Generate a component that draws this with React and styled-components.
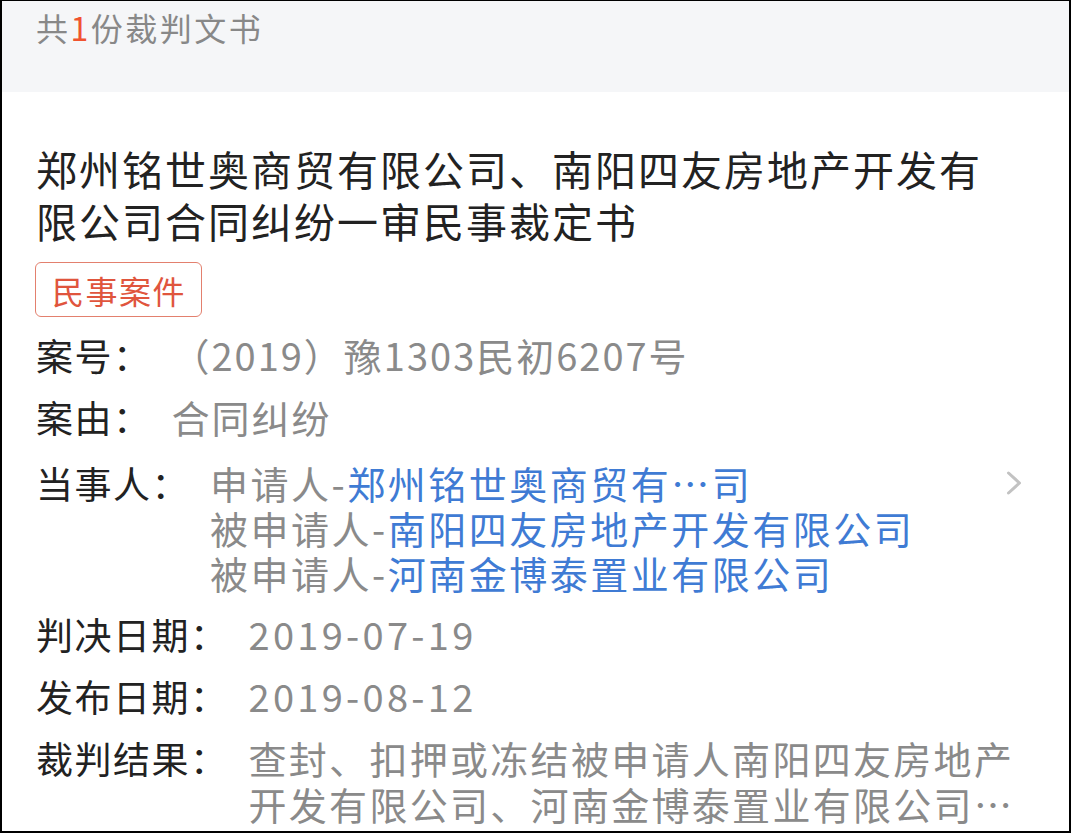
import React from "react";
import styled, { createGlobalStyle } from "styled-components";

const GlobalStyle = createGlobalStyle`
  body {
    margin: 0;
    font-family: "Noto Sans CJK SC", "Noto Sans", sans-serif;
    background: #fff;
  }
`;

const parties = [
  { role: "申请人", name: "郑州铭世奥商贸有…司" },
  { role: "被申请人", name: "南阳四友房地产开发有限公司" },
  { role: "被申请人", name: "河南金博泰置业有限公司" },
];

export default function App() {
  return (
    <Frame>
      <GlobalStyle />
      <TopBar>
        共<Count>1</Count>份裁判文书
      </TopBar>
      <Body>
        <Title>
          郑州铭世奥商贸有限公司、南阳四友房地产开发有限公司合同纠纷一审民事裁定书
        </Title>
        <Tag>民事案件</Tag>
        <Rows>
          <Row>
            <Label>案号：</Label>
            <Value>（2019）豫1303民初6207号</Value>
          </Row>
          <Row>
            <Label>案由：</Label>
            <Value>合同纠纷</Value>
          </Row>
          <Row $party>
            <Label>当事人：</Label>
            <Value $spacing={2.5}>
              {parties.map((p, i) => (
                <Line key={i} $tight>
                  {p.role}-<Link>{p.name}</Link>
                </Line>
              ))}
            </Value>
            <Chevron>
              <svg width="16" height="24" viewBox="0 0 16 24">
                <path
                  d="M2.5 2 L13.5 12 L2.5 22"
                  fill="none"
                  stroke="#c2c2c2"
                  strokeWidth="3"
                  strokeLinecap="round"
                  strokeLinejoin="round"
                />
              </svg>
            </Chevron>
          </Row>
          <Row>
            <Label>判决日期：</Label>
            <Value $spacing={3.3}>2019-07-19</Value>
          </Row>
          <Row>
            <Label>发布日期：</Label>
            <Value $spacing={3.3}>2019-08-12</Value>
          </Row>
          <Row>
            <Label>裁判结果：</Label>
            <Value $spacing={2.3}>
              <Line>查封、扣押或冻结被申请人南阳四友房地产</Line>
              <Line>开发有限公司、河南金博泰置业有限公司…</Line>
            </Value>
          </Row>
        </Rows>
      </Body>
    </Frame>
  );
}

const Frame = styled.div`
  width: 1071px;
  height: 833px;
  box-sizing: border-box;
  border: 2px solid #000;
  border-top-width: 1px;
  overflow: hidden;
  background: #fff;
`;

const TopBar = styled.div`
  height: 91px;
  box-sizing: border-box;
  padding: 5px 0 0 34px;
  background: #f5f6f8;
  font-size: 32px;
  line-height: 42px;
  letter-spacing: 2.5px;
  color: #888;
`;

const Count = styled.span`
  color: #f0532f;
`;

const Body = styled.div`
  padding: 50px 47px 0 34px;
`;

const Title = styled.h1`
  margin: 0;
  max-width: 960px;
  font-size: 41px;
  font-weight: 400;
  line-height: 52px;
  letter-spacing: 2px;
  color: #222;
`;

const Tag = styled.div`
  display: inline-flex;
  align-items: center;
  margin: 16px 0 0 -1px;
  height: 55px;
  box-sizing: border-box;
  padding: 0 15px 0 16px;
  border: 1px solid #e3806e;
  border-radius: 6px;
  font-size: 32px;
  letter-spacing: 1.5px;
  color: #e0553d;
`;

const Rows = styled.div`
  display: flex;
  flex-direction: column;
  gap: 16px;
  margin-top: 15px;
`;

const Row = styled.div`
  display: flex;
  align-items: flex-start;
  gap: 20px;
  line-height: 46px;
  padding-top: ${(p) => (p.$party ? "4px" : "0")};
`;

const Label = styled.div`
  flex-shrink: 0;
  white-space: nowrap;
  font-size: 37px;
  letter-spacing: 1.5px;
  color: #222;
`;

const Value = styled.div`
  font-size: 38px;
  letter-spacing: ${(p) => p.$spacing ?? 2}px;
  color: #8a8a8a;
  white-space: nowrap;
`;

const Line = styled.div`
  line-height: ${(p) => (p.$tight ? "45px" : "46px")};
`;

const Link = styled.span`
  color: #3f7bd4;
`;

const Chevron = styled.div`
  margin-left: auto;
  height: 45px;
  display: flex;
  align-items: center;
`;
